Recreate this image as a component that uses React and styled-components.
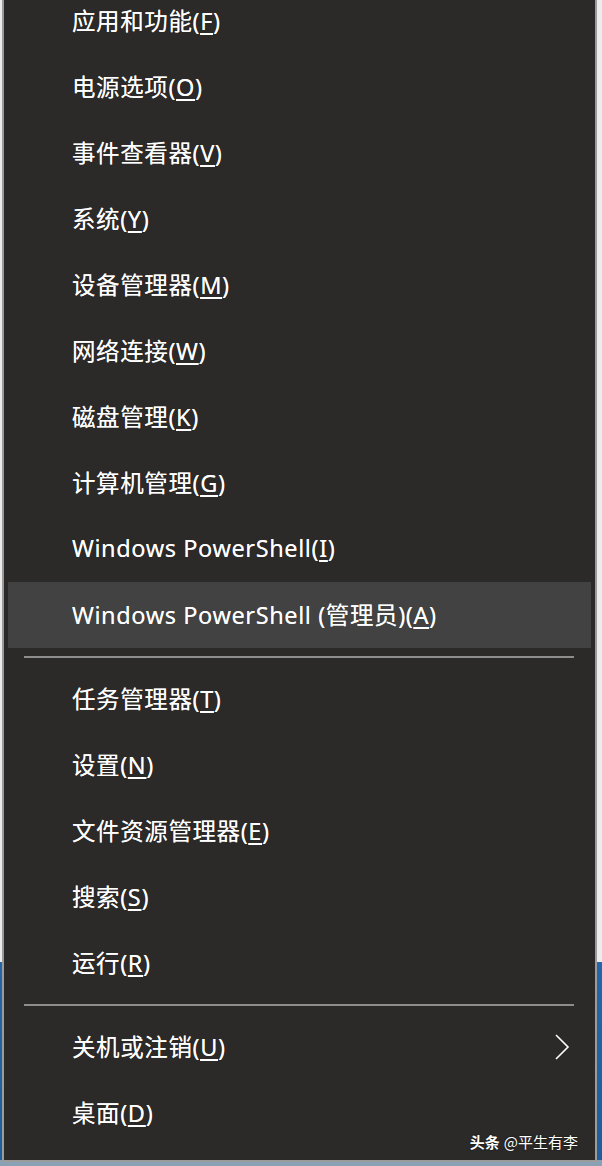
import React from "react"
import styled, { createGlobalStyle } from "styled-components"

const GlobalStyle = createGlobalStyle`
  html, body {
    margin: 0;
    padding: 0;
  }
  body {
    width: 602px;
    height: 1166px;
    overflow: hidden;
    background: linear-gradient(
      to bottom,
      #ececec 0,
      #ececec 962px,
      #2466a8 962px,
      #1f5d9c 1160px,
      #8aa0b4 1160px
    );
    font-family: "Noto Sans", "Noto Sans CJK SC", sans-serif;
  }
`

const Page = styled.div`
  position: relative;
  padding: 0 5px 0 2px;
`

const Menu = styled.ul`
  list-style: none;
  margin: -14px 0 0;
  padding: 0 0 14px;
  background: #2b2a29;
  border: 2px solid #9b9b9b;
  color: #ffffff;
`

const Item = styled.li`
  display: flex;
  align-items: center;
  justify-content: space-between;
  box-sizing: border-box;
  height: 66px;
  margin: 0 4px;
  padding: 0 20px 3px 64px;
  font-size: 23.5px;
  letter-spacing: 0.6px;
  text-shadow: 0 0 0.6px rgba(255, 255, 255, 0.7);
  background: ${(p) => (p.$active ? "#424242" : "transparent")};
`

const Key = styled.span`
  text-decoration: underline;
  text-decoration-thickness: 1.5px;
  text-underline-offset: 3px;
`

const Separator = styled.li`
  height: 18px;
  display: flex;
  align-items: center;
  padding: 0 21px 0 20px;

  &::before {
    content: "";
    flex: 1;
    height: 2px;
    background: #8d8d8d;
  }
`

const Chevron = styled.svg`
  width: 18px;
  height: 28px;
  margin-top: 3px;
  stroke: #ffffff;
  stroke-width: 1.6;
  fill: none;
`

const Watermark = styled.div`
  position: absolute;
  right: 24px;
  bottom: 10px;
  color: #ffffff;
  font-family: "Noto Sans CJK SC", sans-serif;
  font-size: 15px;
  text-shadow: 0 0 2px rgba(0, 0, 0, 0.8);

  b {
    font-weight: 700;
    margin-right: 4px;
  }
`

const Label = ({ text, hotkey }) => (
  <span>
    {text}(<Key>{hotkey}</Key>)
  </span>
)

const groups = [
  [
    ["应用和功能", "F"],
    ["电源选项", "O"],
    ["事件查看器", "V"],
    ["系统", "Y"],
    ["设备管理器", "M"],
    ["网络连接", "W"],
    ["磁盘管理", "K"],
    ["计算机管理", "G"],
    ["Windows PowerShell", "I"],
    ["Windows PowerShell (管理员)", "A", true],
  ],
  [
    ["任务管理器", "T"],
    ["设置", "N"],
    ["文件资源管理器", "E"],
    ["搜索", "S"],
    ["运行", "R"],
  ],
]

const App = () => (
  <Page>
    <GlobalStyle />
    <Menu>
      {groups.map((group, gi) => (
        <React.Fragment key={gi}>
          {group.map(([text, hotkey, active]) => (
            <Item key={text} $active={active}>
              <Label text={text} hotkey={hotkey} />
            </Item>
          ))}
          <Separator />
        </React.Fragment>
      ))}
      <Item>
        <Label text="关机或注销" hotkey="U" />
        <Chevron viewBox="0 0 18 28">
          <polyline points="3,2 15,14 3,26" />
        </Chevron>
      </Item>
      <Item>
        <Label text="桌面" hotkey="D" />
      </Item>
    </Menu>
    <Watermark>
      <b>头条</b>@平生有李
    </Watermark>
  </Page>
)

export default App
